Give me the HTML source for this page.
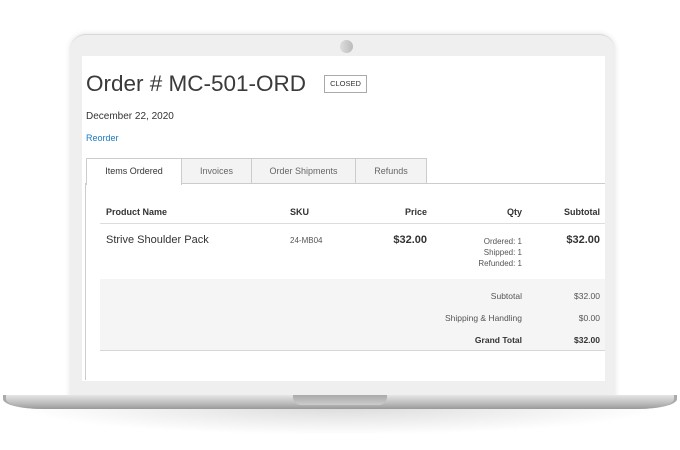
<!DOCTYPE html>
<html><head><meta charset="utf-8"><style>
*{margin:0;padding:0;box-sizing:border-box}
body{width:680px;height:450px;background:#fff;position:relative;overflow:hidden;font-family:"Liberation Sans",sans-serif;color:#333}
.abs{position:absolute}
.bezel{left:70px;top:34px;width:545px;height:370px;background:#efefef;border-radius:16px 16px 0 0;box-shadow:0 0 6px rgba(0,0,0,.12);border-top:1px solid #d8d8d8}
.cam{left:340px;top:40px;width:13px;height:13px;border-radius:50%;background:linear-gradient(90deg,#ddd,#bbb)}
.screen{left:82px;top:56px;width:523px;height:325px;background:#fff;overflow:hidden}
.base{left:3px;top:395px;width:674px;height:14px;background:linear-gradient(#e6e6e6,#bcbcbc 60%,#999);border-radius:0 0 40px 40px / 0 0 10px 10px;border-left:3px solid #aaa;border-right:3px solid #aaa}
.shadow{left:15px;top:407px;width:650px;height:28px;background:radial-gradient(ellipse at top,rgba(0,0,0,.14),rgba(0,0,0,0) 70%)}
.notch{left:293px;top:395px;width:94px;height:10px;background:linear-gradient(#aaa,#ccc);border-radius:0 0 8px 8px}
.t{position:absolute;white-space:nowrap}
.tab{position:absolute;top:158px;height:26px;border:1px solid #ccc;background:#f3f3f3;font-size:9px;color:#666;text-align:center;line-height:25px}
.b{font-weight:bold;color:#333}
</style></head><body>
<div class="abs shadow"></div>
<div class="abs bezel"></div>
<div class="abs cam"></div>
<div class="abs screen"></div>
<div class="abs" style="left:85px;top:183px;width:1px;height:197px;background:#ccc"></div>
<div class="t" style="left:86px;top:71px;font-size:22.5px;color:#3a3a3a">Order # MC-501-ORD</div>
<div class="t" style="left:324px;top:75px;width:43px;height:18px;border:1px solid #aaa;font-size:7.5px;line-height:16px;text-align:center;color:#333">CLOSED</div>
<div class="t" style="left:86px;top:111px;font-size:10px">December 22, 2020</div>
<div class="t" style="left:86px;top:133px;font-size:9px;color:#1979c3">Reorder</div>
<div class="abs" style="left:86px;top:183px;width:519px;height:1px;background:#ccc"></div>
<div class="tab" style="left:86px;width:96px;background:#fff;border-bottom:none;height:27px;color:#333">Items Ordered</div>
<div class="tab" style="left:181px;width:71px">Invoices</div>
<div class="tab" style="left:251px;width:105px">Order Shipments</div>
<div class="tab" style="left:355px;width:72px">Refunds</div>
<div class="t b" style="left:106px;top:207px;font-size:9px">Product Name</div>
<div class="t b" style="left:290px;top:207px;font-size:9px">SKU</div>
<div class="t b" style="right:253px;top:207px;font-size:9px">Price</div>
<div class="t b" style="right:158px;top:207px;font-size:9px">Qty</div>
<div class="t b" style="right:80px;top:207px;font-size:9px">Subtotal</div>
<div class="abs" style="left:100px;top:223px;width:505px;height:1px;background:#ddd"></div>
<div class="t" style="left:106px;top:234px;font-size:11px">Strive Shoulder Pack</div>
<div class="t" style="left:290px;top:236px;font-size:8px;color:#555">24-MB04</div>
<div class="t b" style="right:253px;top:234px;font-size:11px">$32.00</div>
<div class="t" style="right:158px;top:236px;font-size:8px;color:#555;text-align:right;line-height:11px">Ordered: 1<br>Shipped: 1<br>Refunded: 1</div>
<div class="t b" style="right:80px;top:234px;font-size:11px">$32.00</div>
<div class="abs" style="left:100px;top:279px;width:505px;height:72px;background:#f5f5f5;border-bottom:1px solid #d6d6d6"></div>
<div class="t" style="right:158px;top:291px;font-size:8.5px;color:#555">Subtotal</div>
<div class="t" style="right:80px;top:291px;font-size:8.5px;color:#555">$32.00</div>
<div class="t" style="right:158px;top:313px;font-size:8.5px;color:#555">Shipping &amp; Handling</div>
<div class="t" style="right:80px;top:313px;font-size:8.5px;color:#555">$0.00</div>
<div class="t b" style="right:158px;top:335px;font-size:8.5px">Grand Total</div>
<div class="t b" style="right:80px;top:335px;font-size:8.5px">$32.00</div>
<div class="abs base"></div>
<div class="abs notch"></div>
</body></html>
